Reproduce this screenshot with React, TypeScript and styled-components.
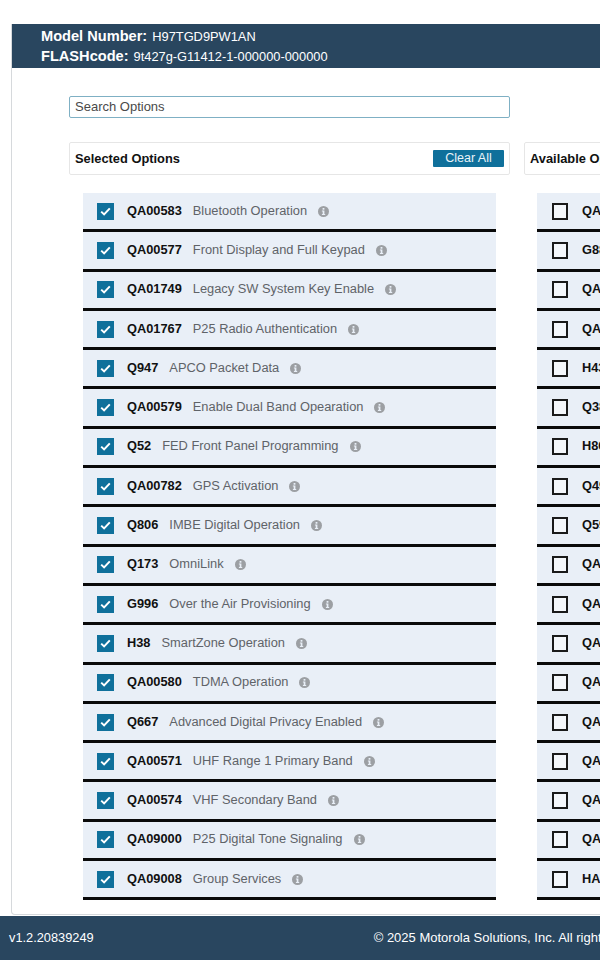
import styled, { createGlobalStyle } from 'styled-components';

interface OptionRowData {
  code: string;
  name: string;
}

const selectedOptions: OptionRowData[] = [
  { code: 'QA00583', name: 'Bluetooth Operation' },
  { code: 'QA00577', name: 'Front Display and Full Keypad' },
  { code: 'QA01749', name: 'Legacy SW System Key Enable' },
  { code: 'QA01767', name: 'P25 Radio Authentication' },
  { code: 'Q947', name: 'APCO Packet Data' },
  { code: 'QA00579', name: 'Enable Dual Band Opearation' },
  { code: 'Q52', name: 'FED Front Panel Programming' },
  { code: 'QA00782', name: 'GPS Activation' },
  { code: 'Q806', name: 'IMBE Digital Operation' },
  { code: 'Q173', name: 'OmniLink' },
  { code: 'G996', name: 'Over the Air Provisioning' },
  { code: 'H38', name: 'SmartZone Operation' },
  { code: 'QA00580', name: 'TDMA Operation' },
  { code: 'Q667', name: 'Advanced Digital Privacy Enabled' },
  { code: 'QA00571', name: 'UHF Range 1 Primary Band' },
  { code: 'QA00574', name: 'VHF Secondary Band' },
  { code: 'QA09000', name: 'P25 Digital Tone Signaling' },
  { code: 'QA09008', name: 'Group Services' },
];

// the right column runs off the page, only the start of each code shows
const availableCodes = [
  'QA', 'G88', 'QA', 'QA', 'H43', 'Q38', 'H86', 'Q49', 'Q59',
  'QA', 'QA', 'QA', 'QA', 'QA', 'QA', 'QA', 'QA', 'HA',
];

const GlobalStyle = createGlobalStyle`
  html, body {
    margin: 0;
    padding: 0;
    width: 600px;
    height: 960px;
    overflow: hidden;
    background: #fff;
    font-family: "Liberation Sans", Arial, sans-serif;
  }
`;

const Page = styled.div`
  width: 600px;
  height: 960px;
  display: flex;
  flex-direction: column;
  overflow: hidden;
`;

const Main = styled.div`
  flex: 1;
  min-height: 0;
  padding: 24px 0 0 11px;
`;

const Card = styled.div`
  width: 700px;
  height: 891px;
  box-sizing: border-box;
  border: 1px solid #d6d9dc;
  border-top: 0;
  border-radius: 0 0 4px 4px;
  overflow: hidden;
`;

const ModelHeader = styled.header`
  height: 44px;
  box-sizing: border-box;
  background: #29465f;
  color: #fff;
  padding: 3px 0 0 29px;
`;

const ModelLine = styled.div`
  height: 19.5px;
  line-height: 19.5px;
  font-size: 12.85px;
  white-space: nowrap;
`;

const ModelLabel = styled.strong`
  font-size: 14.6px;
  font-weight: 700;
  margin-right: 5px;
`;

const Body = styled.div`
  padding: 28px 0 0 57px;
`;

const SearchBox = styled.div`
  width: 441px;
  height: 22px;
  box-sizing: border-box;
  border: 1px solid #7fb0c4;
  border-radius: 2px;
  padding: 0 5px;
  font-size: 13px;
  line-height: 20px;
  color: #4a4a4a;
`;

const Columns = styled.div`
  display: grid;
  grid-template-columns: 441px 441px;
  column-gap: 14px;
  margin-top: 24px;
`;

const Column = styled.section`
  display: flex;
  flex-direction: column;
  min-width: 0;
`;

const PanelHeader = styled.div`
  height: 33px;
  box-sizing: border-box;
  border: 1px solid #e6e6e6;
  border-radius: 2px;
  padding: 0 5px;
  display: flex;
  align-items: center;
  justify-content: space-between;
`;

const PanelTitle = styled.span`
  font-size: 12.85px;
  font-weight: 700;
  color: #111;
`;

const ClearButton = styled.button`
  width: 71px;
  height: 17px;
  margin: 0;
  padding: 0;
  border: 0;
  border-radius: 1px;
  background: #0f709b;
  color: #e9f3f8;
  font-family: inherit;
  font-size: 12.5px;
  line-height: 17px;
`;

const RowList = styled.div<{ $inset: number }>`
  display: flex;
  flex-direction: column;
  margin: 18px 14px 0 ${({ $inset }) => $inset}px;
`;

const Row = styled.div`
  height: 39.3px;
  box-sizing: border-box;
  background: #e9eff7;
  border-bottom: 3px solid #0a0a0a;
  padding-left: 14px;
  display: flex;
  align-items: center;
  white-space: nowrap;
`;

const CheckBox = styled.span<{ $checked: boolean }>`
  width: ${({ $checked }) => ($checked ? '17px' : '16px')};
  height: 17px;
  margin: ${({ $checked }) => ($checked ? '0' : '0 1px')};
  flex-shrink: 0;
  box-sizing: border-box;
  display: flex;
  align-items: center;
  justify-content: center;
  background: ${({ $checked }) => ($checked ? '#0f709b' : '#f4f7fb')};
  border: ${({ $checked }) => ($checked ? '0' : '2px solid #1a1a1a')};
`;

const Code = styled.span`
  margin: 0 0 2px 13px;
  font-size: 12.8px;
  font-weight: 700;
  color: #111;
`;

const Name = styled.span`
  margin: 0 0 2px 11px;
  font-size: 12.85px;
  color: #5f6368;
`;

const InfoIcon = styled.svg`
  margin-left: 11px;
  width: 11px;
  height: 11px;
  flex-shrink: 0;
`;

const Footer = styled.footer`
  height: 44px;
  flex-shrink: 0;
  box-sizing: border-box;
  background: #29465f;
  color: #fff;
  font-size: 12.8px;
  padding: 0 0 2px 9px;
  display: flex;
  align-items: center;
  white-space: nowrap;
`;

const Copyright = styled.span`
  margin-left: 280px;
  font-size: 13px;
`;

const CheckMark = () => (
  <svg width="11" height="9" viewBox="0 0 11 9" aria-hidden="true">
    <path d="M1.2 4.6 4.1 7.4 9.8 1.4" fill="none" stroke="#fff" strokeWidth="2" />
  </svg>
);

const Info = () => (
  <InfoIcon viewBox="0 0 11 11" aria-hidden="true">
    <circle cx="5.5" cy="5.5" r="5.5" fill="#9c9fa3" />
    <rect x="4.6" y="2" width="1.8" height="1.7" fill="#e9eff7" />
    <path d="M3.9 4.6h2.5v3.3h.8v1H3.9v-1h.8V5.6h-.8z" fill="#e9eff7" />
  </InfoIcon>
);

export default function App() {
  return (
    <Page>
      <GlobalStyle />
      <Main>
        <Card>
          <ModelHeader>
            <ModelLine>
              <ModelLabel>Model Number:</ModelLabel>H97TGD9PW1AN
            </ModelLine>
            <ModelLine>
              <ModelLabel>FLASHcode:</ModelLabel>9t427g-G11412-1-000000-000000
            </ModelLine>
          </ModelHeader>
          <Body>
            <SearchBox>Search Options</SearchBox>
            <Columns>
              <Column>
                <PanelHeader>
                  <PanelTitle>Selected Options</PanelTitle>
                  <ClearButton>Clear All</ClearButton>
                </PanelHeader>
                <RowList $inset={14}>
                  {selectedOptions.map((option) => (
                    <Row key={option.code}>
                      <CheckBox $checked>
                        <CheckMark />
                      </CheckBox>
                      <Code>{option.code}</Code>
                      <Name>{option.name}</Name>
                      <Info />
                    </Row>
                  ))}
                </RowList>
              </Column>
              <Column>
                <PanelHeader>
                  <PanelTitle>Available Options</PanelTitle>
                </PanelHeader>
                <RowList $inset={13}>
                  {availableCodes.map((code, index) => (
                    <Row key={index}>
                      <CheckBox $checked={false} />
                      <Code>{code}</Code>
                    </Row>
                  ))}
                </RowList>
              </Column>
            </Columns>
          </Body>
        </Card>
      </Main>
      <Footer>
        v1.2.20839249
        <Copyright>© 2025 Motorola Solutions, Inc. All rights reserved.</Copyright>
      </Footer>
    </Page>
  );
}
